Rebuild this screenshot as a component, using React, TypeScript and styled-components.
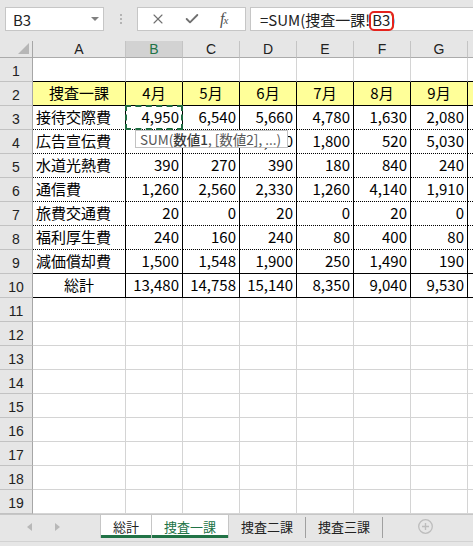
import React from "react";
import styled, { createGlobalStyle } from "styled-components";
import { Check, X } from "lucide-react";

const GREEN = "#217346";
const CHROME = "#e6e6e6";
const GRID = "#d4d4d4";

const GlobalStyle = createGlobalStyle`
  html, body {
    margin: 0;
    padding: 0;
    background: #ffffff;
  }
  body {
    font-family: "Noto Sans CJK JP", "Noto Sans", sans-serif;
    color: #000;
  }
`;

const Window = styled.div`
  width: 473px;
  height: 546px;
  overflow: hidden;
  display: flex;
  flex-direction: column;
  background: ${CHROME};
`;

/* ---------- formula bar ---------- */

const FormulaBar = styled.div`
  display: flex;
  height: 24px;
  padding: 7px 0 10px 5px;
`;

const Box = styled.div`
  box-sizing: border-box;
  height: 24px;
  background: #fff;
  border: 1px solid #c6c6c6;
`;

const NameBox = styled(Box)`
  width: 99px;
  display: flex;
  align-items: center;
  justify-content: space-between;
  padding: 0 4px 0 7px;
  font-size: 15px;
  color: #222;
`;

const Caret = styled.span`
  width: 0;
  height: 0;
  border-left: 4px solid transparent;
  border-right: 4px solid transparent;
  border-top: 4px solid #808080;
`;

const Grip = styled.div`
  width: 33px;
  display: flex;
  flex-direction: column;
  align-items: center;
  justify-content: center;
  gap: 2px;
`;

const GripDot = styled.span`
  width: 2px;
  height: 2px;
  background: #b4b4b4;
`;

const ButtonBox = styled(Box)`
  width: 109px;
  display: flex;
  align-items: center;
  gap: 18px;
  padding-left: 12px;
  color: #707070;
`;

const Fx = styled.span`
  font-family: "Liberation Serif", serif;
  font-style: italic;
  font-size: 16px;
  color: #505050;
  letter-spacing: -1px;
  margin-left: 2px;

  small {
    font-size: 11px;
  }
`;

const FormulaInput = styled(Box)`
  flex: 1;
  margin-left: 4px;
  border-right: none;
  padding: 2px 0 0 9px;
  font-size: 15px;
  line-height: 20px;
  color: #222;
  white-space: nowrap;
  overflow: visible;
`;

const RefMark = styled.span`
  position: relative;
  display: inline-block;
  margin-left: 2px;

  &::after {
    content: "";
    position: absolute;
    left: -3px;
    right: -4px;
    top: 1px;
    bottom: -1px;
    border: 2px solid #e5231d;
    border-radius: 5px;
  }
`;

/* ---------- sheet ---------- */

const Sheet = styled.div`
  height: 473px;
  overflow: hidden;
  display: grid;
  grid-template-columns: 33px 93px repeat(7, 57px);
  grid-template-rows: 17px;
  grid-auto-rows: 24px;
  background: #fff;
`;

const Corner = styled.div`
  box-sizing: border-box;
  background: ${CHROME};
  border-right: 1px solid #a6a6a6;
  border-bottom: 1px solid #ababab;
  display: flex;
  align-items: flex-end;
  justify-content: flex-end;
  padding: 0 3px 3px 0;
`;

const CornerTriangle = styled.span`
  width: 0;
  height: 0;
  border-left: 11px solid transparent;
  border-bottom: 11px solid #b6b6b6;
`;

const ColHead = styled.div<{ $selected?: boolean }>`
  box-sizing: border-box;
  background: ${(p) => (p.$selected ? "#d2d2d2" : CHROME)};
  color: ${(p) => (p.$selected ? GREEN : "#222")};
  border-right: 1px solid #c4c4c4;
  border-bottom: 1px solid #ababab;
  display: flex;
  align-items: center;
  justify-content: center;
  font-family: "Liberation Sans", Arial, sans-serif;
  font-size: 14px;
`;

const RowHead = styled.div`
  box-sizing: border-box;
  background: ${CHROME};
  border-right: 1px solid #a6a6a6;
  border-bottom: 1px solid #c2c2c2;
  display: flex;
  align-items: flex-end;
  justify-content: center;
  padding-bottom: 1px;
  font-family: "Liberation Sans", Arial, sans-serif;
  font-size: 14px;
  line-height: 18px;
  color: #222;
`;

type Line = "grid" | "solid" | "dotted";
type Align = "left" | "right" | "center";

const Cell = styled.div<{ $fill?: string; $align: Align; $bottom: Line; $right: Line }>`
  box-sizing: border-box;
  position: relative;
  display: flex;
  align-items: flex-end;
  justify-content: ${(p) =>
    p.$align === "right" ? "flex-end" : p.$align === "center" ? "center" : "flex-start"};
  padding: 0 3px 2px 3px;
  background: ${(p) => p.$fill ?? "#fff"};
  border-right: 1px solid ${(p) => (p.$right === "solid" ? "#000" : GRID)};
  border-bottom: 1px ${(p) => (p.$bottom === "dotted" ? "dotted" : "solid")}
    ${(p) => (p.$bottom === "grid" ? GRID : "#000")};
  font-size: 15px;
  line-height: 20px;
  white-space: nowrap;
`;

const ActiveCell = styled.span`
  position: absolute;
  left: -1px;
  top: -1px;
  right: -1px;
  bottom: -1px;
  border: 2px dashed #1d6b40;
  pointer-events: none;
`;

const Tooltip = styled.div`
  position: absolute;
  z-index: 2;
  left: 9px;
  top: 0;
  box-sizing: border-box;
  width: 153px;
  height: 18px;
  padding: 0 4px;
  background: #fff;
  border: 1px solid #c2c2c2;
  font-size: 13.5px;
  line-height: 16px;
  color: #555;
  white-space: nowrap;

  b {
    font-weight: 500;
    color: #3a3a3a;
  }
`;

/* ---------- sheet tabs ---------- */

const TabBar = styled.div`
  box-sizing: border-box;
  height: 27px;
  border-top: 1px solid #c6c6c6;
  display: flex;
  align-items: flex-start;
`;

const Nav = styled.div`
  box-sizing: border-box;
  width: 100px;
  height: 23px;
  display: flex;
  align-items: center;
  gap: 23px;
  padding-left: 27px;
`;

const NavArrow = styled.span<{ $dir: "left" | "right" }>`
  width: 0;
  height: 0;
  border-top: 4px solid transparent;
  border-bottom: 4px solid transparent;
  ${(p) =>
    p.$dir === "left" ? "border-right: 5px solid #b8b8b8;" : "border-left: 5px solid #b8b8b8;"}
`;

const TabList = styled.div`
  display: flex;
  border-left: 1px solid #c6c6c6;
`;

const Tab = styled.div<{ $selected?: boolean; $active?: boolean }>`
  position: relative;
  box-sizing: border-box;
  height: 23px;
  padding: 0 12px;
  display: flex;
  align-items: center;
  font-size: 13px;
  color: ${(p) => (p.$active ? GREEN : "#222")};
  background: ${(p) => (p.$selected ? "#fff" : "transparent")};
  border-right: 1px solid ${(p) => (p.$selected ? "#c6c6c6" : "transparent")};

  &::after {
    content: "";
    position: absolute;
    left: ${(p) => (p.$selected ? "0" : "auto")};
    right: ${(p) => (p.$selected ? "0" : "-1px")};
    bottom: 0;
    top: ${(p) => (p.$selected ? "auto" : "2px")};
    height: ${(p) => (p.$selected ? "3px" : "auto")};
    width: ${(p) => (p.$selected ? "auto" : "1px")};
    background: ${(p) => (p.$selected ? GREEN : "#a0a0a0")};
  }
`;

const AddSheet = styled.span`
  margin: 4px 0 0 35px;
  display: flex;
`;

const StatusStrip = styled.div`
  flex: 1;
  border-top: 1px solid #d2d2d2;
`;

/* ---------- data ---------- */

const COLS = ["A", "B", "C", "D", "E", "F", "G", "H"];
const MONTHS = ["4月", "5月", "6月", "7月", "8月", "9月"];
const ITEMS: [string, number[]][] = [
  ["接待交際費", [4950, 6540, 5660, 4780, 1630, 2080]],
  ["広告宣伝費", [5120, 3680, 4600, 1800, 520, 5030]],
  ["水道光熱費", [390, 270, 390, 180, 840, 240]],
  ["通信費", [1260, 2560, 2330, 1260, 4140, 1910]],
  ["旅費交通費", [20, 0, 20, 0, 20, 0]],
  ["福利厚生費", [240, 160, 240, 80, 400, 80]],
  ["減価償却費", [1500, 1548, 1900, 250, 1490, 190]],
];
const TOTALS = MONTHS.map((_, i) => ITEMS.reduce((sum, [, v]) => sum + v[i], 0));
const fmt = (n: number) => n.toLocaleString("en-US");

const TABS = [
  { name: "総計", selected: true },
  { name: "捜査一課", selected: true, active: true },
  { name: "捜査二課" },
  { name: "捜査三課" },
];

// B4 and C4 sit fully under the argument tooltip, so they are left blank on screen
const HIDDEN = new Set(["4:1", "4:2"]);

function cellContent(row: number, col: number): { text: string; align: Align } {
  if (col > 6) return { text: "", align: "left" };
  if (row === 2) return { text: col === 0 ? "捜査一課" : MONTHS[col - 1], align: "center" };
  if (row >= 3 && row <= 9) {
    const [label, values] = ITEMS[row - 3];
    if (col === 0) return { text: label, align: "left" };
    return { text: HIDDEN.has(`${row}:${col}`) ? "" : fmt(values[col - 1]), align: "right" };
  }
  if (row === 10) return col === 0 ? { text: "総計", align: "center" } : { text: fmt(TOTALS[col - 1]), align: "right" };
  return { text: "", align: "left" };
}

function bottomLine(row: number): Line {
  if (row === 1 || row === 2 || row === 9 || row === 10) return "solid";
  if (row >= 3 && row <= 8) return "dotted";
  return "grid";
}

export default function App() {
  const rows = Array.from({ length: 19 }, (_, i) => i + 1);

  return (
    <>
      <GlobalStyle />
      <Window>
        <FormulaBar>
          <NameBox>
            B3
            <Caret />
          </NameBox>
          <Grip>
            <GripDot />
            <GripDot />
            <GripDot />
          </Grip>
          <ButtonBox>
            <X size={16} strokeWidth={1.7} />
            <Check size={16} strokeWidth={2.8} />
            <Fx>
              f<small>x</small>
            </Fx>
          </ButtonBox>
          <FormulaInput>
            =SUM(捜査一課!<RefMark>B3</RefMark>)
          </FormulaInput>
        </FormulaBar>

        <Sheet>
          <Corner>
            <CornerTriangle />
          </Corner>
          {COLS.map((c) => (
            <ColHead key={c} $selected={c === "B"}>
              {c === "H" ? "" : c}
            </ColHead>
          ))}
          {rows.map((r) => (
            <React.Fragment key={r}>
              <RowHead>{r}</RowHead>
              {COLS.map((c, ci) => {
                const inTable = r >= 2 && r <= 10;
                const { text, align } = cellContent(r, ci);
                return (
                  <Cell
                    key={c}
                    $align={align}
                    $fill={r === 2 ? "#ffff99" : undefined}
                    $bottom={bottomLine(r)}
                    $right={inTable ? "solid" : "grid"}
                  >
                    {text}
                    {r === 3 && c === "B" && <ActiveCell />}
                    {r === 4 && c === "B" && (
                      <Tooltip>
                        SUM(<b>数値1</b>, [数値2], ...)
                      </Tooltip>
                    )}
                  </Cell>
                );
              })}
            </React.Fragment>
          ))}
        </Sheet>

        <TabBar>
          <Nav>
            <NavArrow $dir="left" />
            <NavArrow $dir="right" />
          </Nav>
          <TabList>
            {TABS.map((t) => (
              <Tab key={t.name} $selected={t.selected} $active={t.active}>
                {t.name}
              </Tab>
            ))}
          </TabList>
          <AddSheet>
            <svg width="15" height="15" viewBox="0 0 15 15">
              <circle cx="7.5" cy="7.5" r="6.8" fill="none" stroke="#bdbdbd" strokeWidth="1.3" />
              <path d="M7.5 4v7M4 7.5h7" stroke="#bdbdbd" strokeWidth="1.4" />
            </svg>
          </AddSheet>
        </TabBar>
        <StatusStrip />
      </Window>
    </>
  );
}
